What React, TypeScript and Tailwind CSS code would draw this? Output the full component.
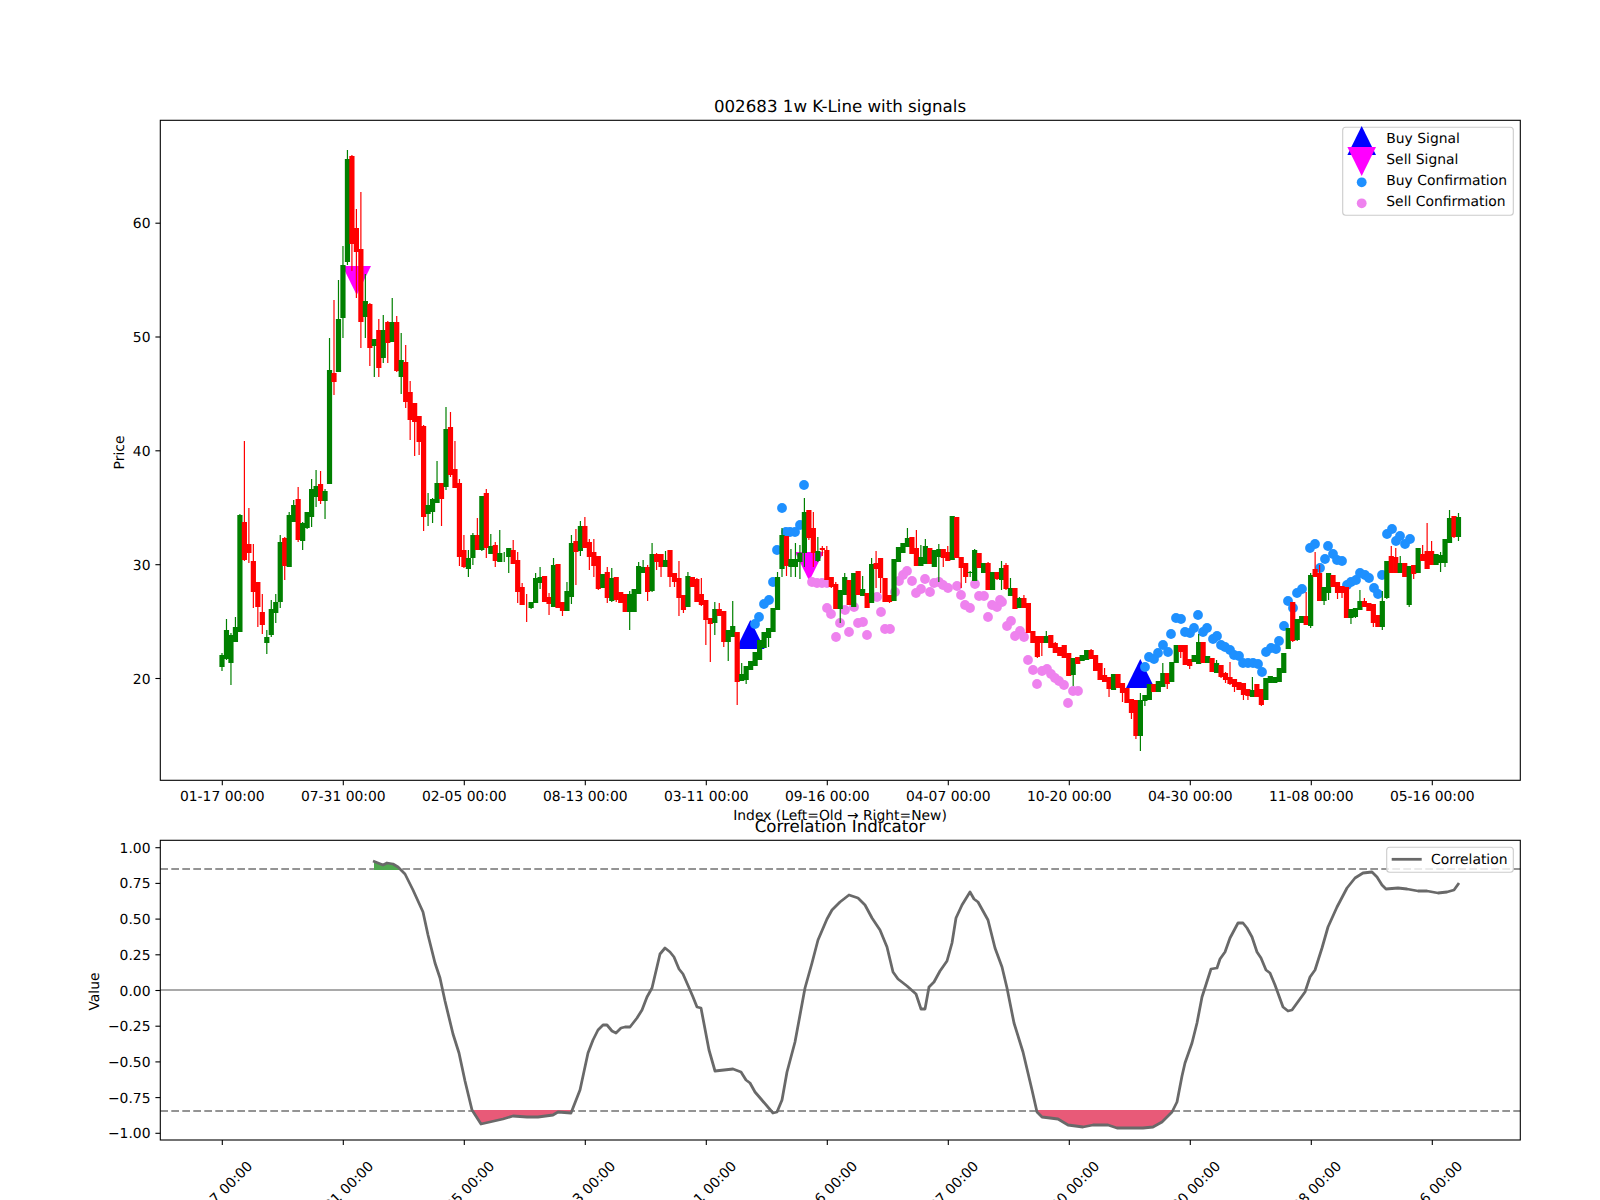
type Candle = ["g" | "r", number, number, number, number];

// body top, body bottom, wick top, wick bottom (figure pixels)
const candles: Candle[] = [
  ["g",655,667,653,671],["g",630,659,619,660],["g",635,663,633,685],["g",627,642,617,642],["g",515,632,514,632],
  ["r",522,560,441,561],["r",544,553,508,563],["r",561,592,544,608],["r",582,607,582,627],["r",612,625,594,634],
  ["g",637,643,630,654],["g",609,635,600,637],["g",602,613,594,623],["g",542,602,535,608],["r",538,566,537,580],
  ["g",515,567,512,567],["g",505,522,500,522],["r",499,540,487,542],["g",523,541,522,550],["g",512,528,512,529],
  ["g",489,517,479,527],["g",486,497,470,507],["r",484,501,471,504],["g",491,501,489,519],["g",370,484,338,484],
  ["r",373,382,300,395],["g",319,372,280,372],["g",265,318,246,338],["g",159,262,150,265],["r",156,244,155,271],
  ["r",228,252,209,298],["r",249,322,192,348],["g",301,317,274,338],["r",304,348,303,366],["g",339,346,339,377],
  ["r",330,368,319,377],["g",330,358,315,363],["r",322,343,321,363],["g",322,342,298,342],["r",322,371,316,372],
  ["g",360,377,333,394],["r",362,402,345,408],["r",392,420,381,440],["r",403,422,403,456],["r",416,442,416,455],
  ["r",426,517,425,531],["g",505,514,493,526],["g",499,512,498,523],["g",483,503,461,503],["r",483,499,483,526],
  ["g",429,487,407,490],["r",427,475,412,477],["r",469,488,441,488],["r",483,557,479,566],["r",550,567,535,568],
  ["g",558,569,550,577],["g",535,558,533,565],["r",535,550,518,550],["g",496,550,496,551],["r",493,548,489,558],
  ["g",546,554,534,554],["r",545,561,542,567],["g",553,562,530,562],["g",556,556,552,562],["g",548,557,548,573],
  ["r",550,564,540,564],["r",560,592,552,603],["r",587,605,583,605],["r",603,603,594,622],["g",602,608,602,609],
  ["g",578,603,573,603],["g",577,583,567,589],["r",576,602,576,602],["r",597,604,593,615],["g",565,607,558,607],
  ["r",564,608,564,608],["r",602,611,602,616],["g",591,611,582,611],["g",543,597,535,604],["r",541,552,529,585],
  ["g",526,551,521,556],["r",526,548,517,548],["r",542,557,539,570],["r",552,566,539,577],["r",556,589,556,590],
  ["g",574,588,574,588],["r",572,598,567,603],["g",578,601,568,602],["r",577,600,577,602],["r",592,603,592,603],
  ["r",594,612,594,612],["g",594,612,591,630],["g",589,612,589,612],["g",566,594,562,594],["g",567,573,560,573],
  ["r",567,592,565,601],["g",554,591,543,592],["r",554,562,553,570],["r",554,567,554,577],["g",560,567,551,567],
  ["r",550,577,550,587],["r",573,582,573,587],["r",578,598,561,616],["r",595,610,595,613],["g",576,607,572,607],
  ["r",577,587,577,587],["r",579,602,578,602],["r",594,605,578,606],["r",600,620,600,645],["r",618,624,618,662],
  ["g",609,623,602,635],["r",609,616,603,616],["r",611,642,611,647],["g",630,642,630,661],["g",626,637,601,637],
  ["r",632,682,632,705],["g",674,681,663,681],["g",666,680,666,684],["g",661,670,661,670],["g",652,666,652,666],
  ["g",640,660,640,660],["g",632,648,632,648],["g",628,638,628,647],["g",608,632,608,632],["g",577,610,572,610],
  ["g",535,569,528,577],["r",536,566,536,576],["g",559,567,549,577],["g",559,567,543,577],["g",553,562,545,579],
  ["g",512,553,498,567],["r",510,538,510,540],["r",528,553,512,567],["g",551,561,537,562],["r",548,550,546,556],
  ["r",550,580,546,580],["r",577,587,577,588],["r",584,609,582,609],["g",590,609,590,623],["g",577,595,573,595],
  ["r",580,605,580,605],["g",573,607,573,607],["r",571,595,571,595],["g",589,596,576,596],["r",593,608,593,608],
  ["g",564,603,558,603],["r",563,569,551,588],["r",558,578,558,593],["r",578,602,578,602],["r",595,602,595,603],
  ["g",559,601,559,601],["g",547,562,547,562],["g",543,553,543,553],["g",538,547,528,547],["r",537,554,537,554],
  ["r",548,566,530,566],["g",557,566,545,566],["g",546,564,539,564],["r",548,564,548,564],["g",550,567,550,567],
  ["g",549,557,544,582],["r",549,558,549,567],["r",552,561,546,561],["g",516,560,516,560],["r",517,558,517,558],
  ["r",557,568,557,588],["r",563,577,563,583],["g",572,573,571,577],["g",550,581,549,581],["r",553,568,553,568],
  ["g",563,573,563,573],["r",563,590,562,590],["g",572,590,572,590],["r",572,579,572,580],["g",568,580,561,590],
  ["r",565,589,563,590],["g",588,596,578,596],["r",588,609,588,609],["g",598,608,597,608],["r",598,608,595,608],
  ["r",603,633,603,633],["r",631,643,631,643],["r",636,657,636,658],["r",636,643,636,656],["g",636,643,631,643],
  ["r",635,648,635,648],["r",643,653,642,653],["r",647,656,647,656],["r",645,658,645,658],["r",653,676,653,676],
  ["g",658,675,658,686],["r",657,664,657,664],["g",655,661,655,661],["g",650,660,650,660],["r",650,659,649,659],
  ["r",655,671,655,671],["r",663,680,663,680],["r",675,682,668,682],["r",677,689,677,697],["g",674,690,674,690],
  ["r",674,688,674,688],["r",683,693,683,702],["r",688,703,688,703],["r",699,713,699,719],["r",700,736,700,739],
  ["g",700,736,693,751],["g",695,701,695,706],["g",684,700,684,700],["r",684,692,684,692],["g",681,692,681,692],
  ["g",673,687,663,687],["r",673,684,673,689],["g",662,682,662,682],["g",645,663,645,663],["r",645,652,645,658],
  ["r",645,665,645,665],["r",659,666,659,669],["g",655,662,655,662],["g",642,664,634,664],["r",642,663,642,663],
  ["g",656,663,656,663],["r",658,672,658,672],["g",663,673,660,673],["r",665,677,665,678],["r",673,680,672,683],
  ["r",677,684,662,685],["r",679,687,679,692],["r",682,690,682,690],["r",683,695,683,700],["r",689,696,689,700],
  ["g",690,697,677,697],["r",684,697,684,697],["r",689,705,689,706],["g",678,700,678,700],["g",676,683,676,683],
  ["g",677,683,677,683],["g",668,682,668,682],["g",653,673,653,673],["g",628,649,628,649],["r",602,641,602,642],
  ["g",619,640,619,641],["g",616,623,616,623],["r",616,625,592,625],["g",575,626,573,628],["r",569,577,552,577],
  ["r",573,601,565,601],["g",587,601,587,605],["g",573,593,573,600],["r",575,587,575,587],["r",582,593,582,599],
  ["r",586,593,586,598],["r",587,618,587,618],["g",609,618,609,624],["g",608,617,608,618],["g",601,610,590,610],
  ["r",601,607,598,607],["r",603,611,603,611],["r",604,623,604,627],["r",615,627,615,627],["g",601,627,591,630],
  ["g",561,598,561,599],["r",556,573,546,573],["r",557,573,548,573],["g",563,573,556,573],["r",563,577,563,577],
  ["g",566,605,566,607],["r",565,574,565,579],["g",548,573,548,573],["r",554,561,545,561],["r",551,569,523,569],
  ["r",551,565,541,565],["g",554,565,554,565],["g",555,563,552,572],["g",539,563,539,567],["g",518,543,510,543],
  ["r",516,537,516,538],["g",517,537,513,541],
];

const buyDots: [number, number][] = [
  [804,485],[782,508],[800,525],[795,532],[790,532],[786,532],[777,550],[773,582],[769,600],[764,604],[759,617],[755,624],
  [1145,667],[1149,657],[1154,659],[1158,653],[1163,645],[1168,652],[1171,634],[1176,618],[1181,619],[1185,632],[1190,633],
  [1194,628],[1198,615],[1203,632],[1207,628],[1213,639],[1217,636],[1221,645],[1225,647],[1230,650],[1234,655],[1239,656],
  [1243,663],[1248,663],[1253,663],[1258,664],[1262,672],[1266,652],[1271,648],[1276,649],[1279,641],[1284,626],[1288,601],
  [1293,608],[1297,593],[1302,589],[1310,548],[1315,544],[1320,568],[1325,559],[1328,546],[1333,554],[1337,560],[1342,561],
  [1347,585],[1351,582],[1356,580],[1360,573],[1365,575],[1369,578],[1374,588],[1378,594],[1382,575],[1387,534],[1392,529],
  [1396,541],[1400,536],[1405,544],[1410,539],
];

const sellDots: [number, number][] = [
  [812,582],[817,583],[822,583],[827,583],[827,608],[831,614],[840,623],[836,637],[845,610],[849,632],[854,607],[858,623],
  [863,622],[867,635],[877,597],[881,612],[885,629],[890,629],[895,592],[899,581],[903,575],[907,571],[912,581],[916,593],
  [921,589],[925,579],[930,592],[934,583],[939,582],[943,585],[948,588],[957,586],[961,595],[965,605],[970,608],[975,584],
  [979,596],[984,596],[988,617],[992,605],[997,607],[1000,600],[1002,602],[1011,621],[1007,626],[1020,631],[1015,636],
  [1024,637],[1028,660],[1033,670],[1042,671],[1047,669],[1037,684],[1051,674],[1055,678],[1059,681],[1064,685],[1068,703],
  [1073,691],[1078,691],
];

const corr: [number, number][] = [
  [373,861],[383,865],[387,863],[393,864],[398,867],[405,874],[413,890],[423,912],[428,935],[435,963],[440,978],[445,1001],
  [453,1034],[459,1053],[465,1081],[472,1110],[481,1124],[503,1119],[513,1116],[527,1117],[538,1117],[553,1115],[558,1112],
  [571,1113],[580,1090],[588,1053],[593,1040],[598,1030],[603,1025],[607,1025],[612,1031],[616,1033],[621,1028],[625,1027],
  [630,1027],[637,1018],[642,1010],[647,997],[652,988],[660,954],[665,948],[670,952],[674,957],[679,969],[683,974],[690,990],
  [693,997],[697,1007],[701,1008],[709,1050],[715,1071],[733,1069],[741,1072],[746,1080],[750,1083],[755,1092],[773,1113],
  [777,1112],[782,1100],[787,1072],[795,1042],[805,988],[812,963],[818,940],[827,919],[832,910],[840,902],[849,895],[858,898],
  [865,905],[872,918],[880,930],[887,947],[893,972],[898,979],[907,986],[916,994],[921,1009],[925,1009],[929,987],[934,982],
  [940,971],[947,961],[952,943],[956,918],[962,905],[970,892],[974,899],[978,902],[988,920],[995,948],[1002,967],[1007,988],
  [1014,1023],[1023,1052],[1032,1090],[1037,1112],[1042,1117],[1058,1119],[1068,1125],[1083,1127],[1093,1125],[1108,1125],
  [1117,1128],[1143,1128],[1153,1127],[1162,1122],[1172,1112],[1177,1102],[1182,1076],[1185,1063],[1192,1043],[1197,1023],
  [1202,997],[1211,969],[1217,968],[1220,959],[1225,952],[1230,938],[1238,923],[1243,923],[1247,928],[1252,937],[1257,952],
  [1261,958],[1266,970],[1270,973],[1275,985],[1283,1007],[1288,1011],[1292,1010],[1305,992],[1310,977],[1315,970],[1322,948],
  [1328,927],[1337,907],[1347,888],[1355,878],[1363,873],[1372,872],[1377,877],[1382,885],[1386,889],[1398,888],[1407,889],
  [1418,891],[1427,891],[1438,893],[1447,892],[1454,890],[1459,883],
];

const dates = ["01-17 00:00","07-31 00:00","02-05 00:00","08-13 00:00","03-11 00:00","09-16 00:00","04-07 00:00","10-20 00:00","04-30 00:00","11-08 00:00","05-16 00:00"];
const tickX = dates.map((_, i) => 222.3 + 121 * i);

const priceTicks: [string, number][] = [["60",223.2],["50",337],["40",450.8],["30",564.7],["20",678.5]];
const valueTicks = ["1.00","0.75","0.50","0.25","0.00","−0.25","−0.50","−0.75","−1.00"];

const pts = (list: [number, number][]) => list.map((p) => p.join(",")).join(" ");
const up = (x: number, y: number) => `${x},${y} ${x - 14.3},${y + 29} ${x + 14.3},${y + 29}`;
const down = (x: number, y: number) => `${x},${y} ${x - 14.3},${y - 29} ${x + 14.3},${y - 29}`;

function KLineChart() {
  return (
    <svg viewBox="0 0 1600 825" className="w-[1600px] h-[825px] shrink-0 overflow-visible">
      <text x={840} y={112} textAnchor="middle" className="text-[16.67px]">002683 1w K-Line with signals</text>
      <rect x={160.3} y={120.3} width={1360} height={660} fill="white" />

      {/* signals sit under the candles */}
      <polygon points={up(750.3, 620)} fill="#0000ff" />
      <polygon points={up(1140.3, 659)} fill="#0000ff" />
      <polygon points={down(356.7, 295)} fill="#ff00ff" />
      <polygon points={down(809.3, 581)} fill="#ff00ff" />
      {sellDots.map(([x, y], i) => <circle key={i} cx={x} cy={y} r={4.9} fill="#ee82ee" />)}
      {buyDots.map(([x, y], i) => <circle key={i} cx={x} cy={y} r={4.9} fill="#1e90ff" />)}

      {candles.map(([c, top, bot, hi, lo], i) => {
        const x = 222 + 4.48 * i;
        const color = c === "g" ? "#008000" : "#ff0000";
        return (
          <g key={i}>
            <line x1={x} x2={x} y1={hi} y2={lo} stroke={color} strokeWidth={1.2} />
            <rect x={x - 2.6} y={top} width={5.2} height={bot - top} fill={color} />
          </g>
        );
      })}

      <rect x={160.3} y={120.3} width={1360} height={660} fill="none" stroke="black" strokeWidth={1.1} />
      {priceTicks.map(([label, y]) => (
        <g key={label}>
          <line x1={155.4} x2={160.3} y1={y} y2={y} stroke="black" strokeWidth={1.1} />
          <text x={150.5} y={y + 5} textAnchor="end" className="text-[13.89px]">{label}</text>
        </g>
      ))}
      {dates.map((d, i) => (
        <g key={d}>
          <line x1={tickX[i]} x2={tickX[i]} y1={780.3} y2={785.2} stroke="black" strokeWidth={1.1} />
          <text x={tickX[i]} y={801} textAnchor="middle" className="text-[13.89px]">{d}</text>
        </g>
      ))}
      <text x={840} y={819.5} textAnchor="middle" className="text-[13.89px]">Index (Left=Old → Right=New)</text>
      <text transform="translate(124 452.5) rotate(-90)" textAnchor="middle" className="text-[13.89px]">Price</text>

      {/* legend */}
      <rect x={1342.7} y={127.3} width={170.6} height={88} rx={3} fill="white" fillOpacity={0.8} stroke="#cccccc" strokeWidth={1.1} />
      <polygon points={up(1361.7, 126)} fill="#0000ff" />
      <polygon points={down(1361.7, 176)} fill="#ff00ff" />
      <circle cx={1361.7} cy={182.3} r={4.9} fill="#1e90ff" />
      <circle cx={1361.7} cy={203.3} r={4.9} fill="#ee82ee" />
      <text x={1386.3} y={143.3} className="text-[13.89px]">Buy Signal</text>
      <text x={1386.3} y={164.3} className="text-[13.89px]">Sell Signal</text>
      <text x={1386.3} y={185} className="text-[13.89px]">Buy Confirmation</text>
      <text x={1386.3} y={206} className="text-[13.89px]">Sell Confirmation</text>
    </svg>
  );
}

function CorrelationChart() {
  const lowerA = corr.filter(([x]) => x >= 472 && x <= 571);
  const lowerB = corr.filter(([x]) => x >= 1037 && x <= 1172);
  return (
    <svg viewBox="0 825 1600 375" className="w-[1600px] h-[375px] shrink-0 overflow-visible">
      <text x={840} y={832} textAnchor="middle" className="text-[16.67px]">Correlation Indicator</text>

      <line x1={160.3} x2={1520.3} y1={990} y2={990} stroke="#a9a9a9" strokeWidth={2} />
      <line x1={160.3} x2={1520.3} y1={869} y2={869} stroke="#949494" strokeWidth={2.08} strokeDasharray="7.7 3.3" />
      <line x1={160.3} x2={1520.3} y1={1111} y2={1111} stroke="#949494" strokeWidth={2.08} strokeDasharray="7.7 3.3" />

      <polygon points="374,870 374,861 383,865 387,863 393,864 398,867 402,870" fill="#4fa94f" />
      <polygon points={`472,1110 ${pts(lowerA)} 571,1110`} fill="#e85a78" />
      <polygon points={`1037,1110 ${pts(lowerB)} 1172,1110`} fill="#e85a78" />
      <polyline points={pts(corr)} fill="none" stroke="#696969" strokeWidth={2.78} strokeLinejoin="round" />

      <rect x={160.3} y={840.3} width={1360} height={299.7} fill="none" stroke="black" strokeWidth={1.1} />
      {valueTicks.map((label, i) => {
        const y = 847.7 + i * 35.7;
        return (
          <g key={label}>
            <line x1={155.4} x2={160.3} y1={y} y2={y} stroke="black" strokeWidth={1.1} />
            <text x={150.5} y={y + 5} textAnchor="end" className="text-[13.89px]">{label}</text>
          </g>
        );
      })}
      {dates.map((d, i) => (
        <g key={d}>
          <line x1={tickX[i]} x2={tickX[i]} y1={1140} y2={1144.9} stroke="black" strokeWidth={1.1} />
          <text transform={`translate(${tickX[i] + 1} 1197) rotate(-45)`} textAnchor="middle" className="text-[13.89px]">{d}</text>
        </g>
      ))}
      <text transform="translate(98.5 991.5) rotate(-90)" textAnchor="middle" className="text-[13.89px]">Value</text>

      {/* legend */}
      <rect x={1386.7} y={847.3} width={126.6} height={25} rx={3} fill="white" fillOpacity={0.8} stroke="#cccccc" strokeWidth={1.1} />
      <line x1={1391.7} x2={1421.7} y1={859.3} y2={859.3} stroke="#696969" strokeWidth={2.78} />
      <text x={1431} y={864} className="text-[13.89px]">Correlation</text>
    </svg>
  );
}

export default function App() {
  return (
    <div className="w-[1600px] h-[1200px] overflow-hidden bg-white flex flex-col font-['DejaVu_Sans',sans-serif] [text-rendering:geometricPrecision]">
      <KLineChart />
      <CorrelationChart />
    </div>
  );
}
